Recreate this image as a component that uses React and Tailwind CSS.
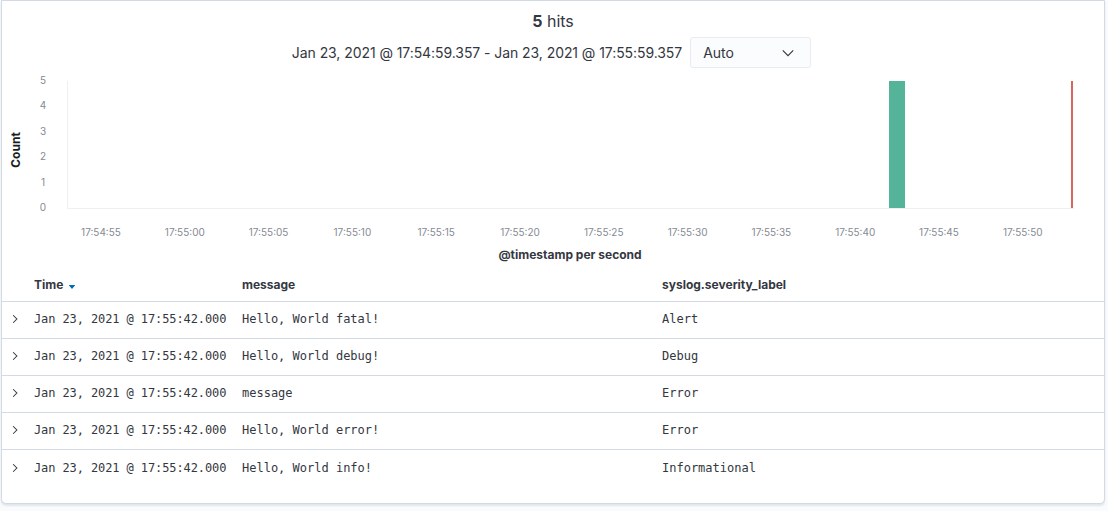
import React from 'react'

const xTicks = ['17:54:55', '17:55:00', '17:55:05', '17:55:10', '17:55:15', '17:55:20', '17:55:25', '17:55:30', '17:55:35', '17:55:40', '17:55:45', '17:55:50']
const yTicks = [5, 4, 3, 2, 1, 0]

const rows = [
  { time: 'Jan 23, 2021 @ 17:55:42.000', message: 'Hello, World fatal!', severity: 'Alert' },
  { time: 'Jan 23, 2021 @ 17:55:42.000', message: 'Hello, World debug!', severity: 'Debug' },
  { time: 'Jan 23, 2021 @ 17:55:42.000', message: 'message', severity: 'Error' },
  { time: 'Jan 23, 2021 @ 17:55:42.000', message: 'Hello, World error!', severity: 'Error' },
  { time: 'Jan 23, 2021 @ 17:55:42.000', message: 'Hello, World info!', severity: 'Informational' },
]

function Histogram() {
  // page x minus 2 (panel border) = svg x ; page y minus 70 = svg y
  return (
    <svg width="1102" height="196" className="block" style={{ fontFamily: 'Inter, "Noto Sans", sans-serif' }}>
      <text x="13" y="80" transform="rotate(-90 13 80)" textAnchor="middle" dominantBaseline="central" fontSize="12" fontWeight="700" fill="#1a1c21">
        Count
      </text>
      {yTicks.map((t, i) => (
        <text key={t} x="41" y={10 + i * 25.4} textAnchor="middle" dominantBaseline="central" fontSize="10" fill="#858a93">
          {t}
        </text>
      ))}
      <line x1="65.5" y1="11" x2="65.5" y2="138" stroke="#eef0f3" />
      <line x1="65" y1="138.5" x2="1072" y2="138.5" stroke="#eef0f3" />
      <rect x="887" y="11" width="16" height="127" fill="#54b399" />
      <rect x="1069" y="11" width="2" height="127" fill="#d6675e" />
      {xTicks.map((t, i) => (
        <text key={t} x={99 + i * 83.8} y="162" textAnchor="middle" dominantBaseline="central" fontSize="10" fill="#858a93">
          {t}
        </text>
      ))}
      <text x="568" y="184" textAnchor="middle" dominantBaseline="central" fontSize="12" fontWeight="700" fill="#343741">
        @timestamp per second
      </text>
    </svg>
  )
}

function Chevron() {
  return (
    <svg viewBox="0 0 16 16" className="h-3 w-3" aria-hidden="true">
      <path d="M5.5 3l5 5-5 5" fill="none" stroke="#343741" strokeWidth="1.4" />
    </svg>
  )
}

export default function App() {
  return (
    <div className="h-[511px] w-full overflow-hidden bg-[#fafbfd]" style={{ fontFamily: 'Inter, "Noto Sans", sans-serif' }}>
      <div className="ml-px h-[504px] w-[1104px] rounded-b-[5px] border border-[#d3dae6] bg-white shadow-[0_2px_2px_rgba(152,162,179,0.25)]">
        <div className="pt-[8px] text-center text-[16px] leading-6 text-[#343741]">
          <span className="font-bold">5</span> hits
        </div>
        <div className="mt-[4px] flex items-center justify-center gap-2 pr-[3px]">
          <span className="text-[14px] tracking-[-0.07px] text-[#343741]">Jan 23, 2021 @ 17:54:59.357 - Jan 23, 2021 @ 17:55:59.357</span>
          <div className="flex h-[31px] w-[121px] items-center justify-between rounded-[3px] border border-[#e8ebf1] bg-[#fbfcfd] pl-3 pr-[15px] text-[14px] text-[#343741]">
            <span>Auto</span>
            <svg viewBox="0 0 16 16" className="h-[14px] w-[14px]" aria-hidden="true">
              <path d="M2 5l6 6 6-6" fill="none" stroke="#343741" strokeWidth="1.3" />
            </svg>
          </div>
        </div>
        <div className="mt-[2px]">
          <Histogram />
        </div>
        <div className="text-[12px] text-[#343741]">
          <div className="flex h-[36px] items-center border-b border-[#d3dae6] pt-[3px] font-bold">
            <span className="w-[32px]" />
            <span className="flex w-[208px] items-center gap-[5px]">
              Time
              <svg viewBox="0 0 10 6" className="mt-[3px] h-[4px] w-[8px]" aria-hidden="true">
                <path d="M0 0h10L5 6z" fill="#006bb4" />
              </svg>
            </span>
            <span className="w-[420px]">message</span>
            <span>syslog.severity_label</span>
          </div>
          {rows.map((r, i) => (
            <div
              key={i}
              className={`flex h-[37px] items-center pb-[2px] ${i < rows.length - 1 ? 'border-b border-[#d3dae6]' : ''}`}
              style={{ fontFamily: '"DejaVu Sans Mono", "Liberation Mono", monospace' }}
            >
              <span className="flex w-[32px] justify-center pr-[6px]">
                <Chevron />
              </span>
              <span className="w-[208px] tracking-[-0.1px]">{r.time}</span>
              <span className="w-[420px]">{r.message}</span>
              <span>{r.severity}</span>
            </div>
          ))}
        </div>
      </div>
    </div>
  )
}
